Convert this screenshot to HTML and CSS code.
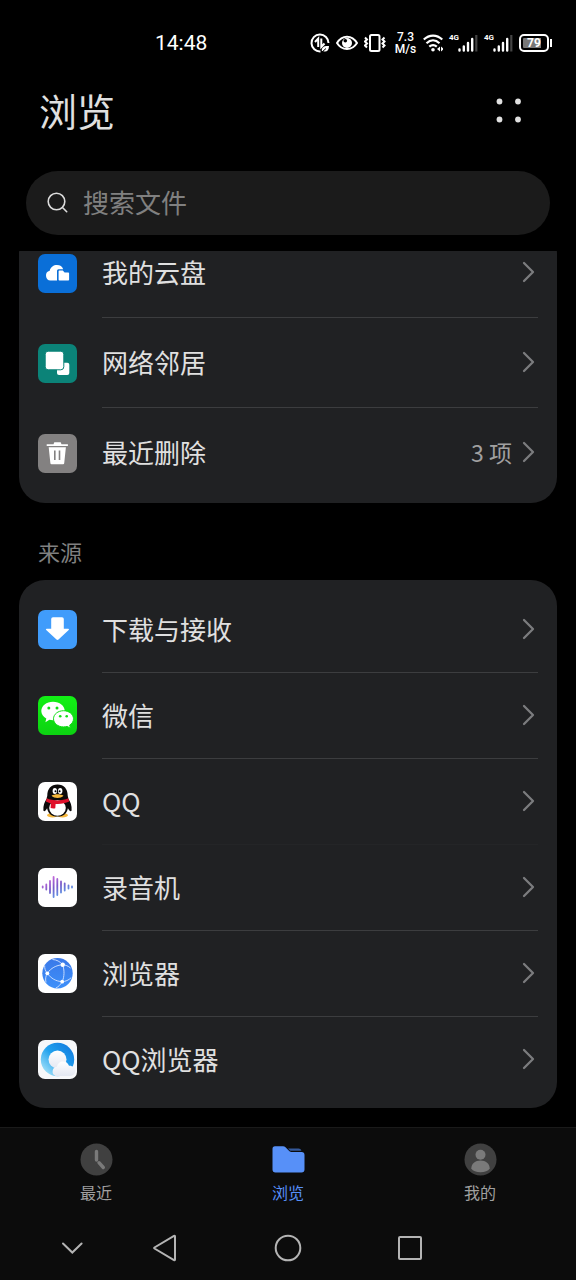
FILE: index.html
```html
<!DOCTYPE html>
<html lang="zh-CN">
<head>
  <meta charset="UTF-8">
  <meta name="viewport" content="width=device-width, initial-scale=1.0">
  <title>浏览</title>
  <link rel="stylesheet" href="styles.css">
</head>
<body>
  <svg class="defs" aria-hidden="true">
    <symbol id="chevron" viewBox="0 0 14 22">
      <path d="M2 2l9 9-9 9" fill="none" stroke="currentColor" stroke-width="2.300" stroke-linecap="round" stroke-linejoin="round"/>
    </symbol>
    <symbol id="bars" viewBox="0 0 20 18">
      <path d="M1.500 15.500v1M5.800 12.500v4M10 9v7.500M14.200 5v11.500" stroke="#fff" stroke-width="2.400" stroke-linecap="round"/>
      <path d="M18.300 1v16.500" stroke="#444" stroke-width="2.200"/>
    </symbol>
  </svg>

  <div class="status-bar">
    <span class="time">14:48</span>
    <div class="status-icons">
      <svg width="20" height="20" viewBox="0 0 20 20" fill="none" stroke="#fff" stroke-width="2">
        <path d="M10.500 18.500A8.500 8.500 0 1 1 18.500 10"/>
        <path d="M8.200 14V5.500L5 9M11.300 5.500V14l3.200-3.500"/>
        <path d="M12 18.500c-1-4 2-6 7-5.500 0 5-3 6.500-6 5z" fill="#fff" stroke="none"/>
        <path d="M12 19l4-3.500" stroke="#000" stroke-width="1"/>
      </svg>
      <svg width="22" height="20" viewBox="0 0 22 20">
        <path d="M1 10C6 1.500 16 1.500 21 10 16 18 6 18 1 10z" fill="none" stroke="#fff" stroke-width="2"/>
        <circle cx="11" cy="10" r="5" fill="#fff"/>
        <circle cx="9.300" cy="7.800" r="1.800" fill="#000"/>
      </svg>
      <svg width="24" height="20" viewBox="0 0 24 20" fill="none" stroke="#fff">
        <rect x="6" y="2" width="9.500" height="16" rx="1.500" stroke-width="2"/>
        <path d="M1 4.500l2 2-2 2 2 2-2 2 2 2M20.500 4.500l-2 2 2 2-2 2 2 2-2 2" stroke-width="2"/>
      </svg>
      <span class="speed"><span>7.3</span><span>M/s</span></span>
      <svg width="20" height="20" viewBox="0 0 20 20" fill="none" stroke="#fff" stroke-width="2.200">
        <path d="M0.800 6.500c5.500-5.300 13-5.300 18.500 0M3.500 10.200c4-3.700 9-3.700 13 0M6.300 13.700c2.300-2 5.200-2 7.500 0"/>
        <circle cx="10" cy="16.700" r="1.800" fill="#fff" stroke="none"/>
        <path d="M17 13.500v5l-3-2.500zM18 13.500v5l3-2.500z" fill="#fff" stroke="none"/>
      </svg>
      <span class="signal"><b>4G</b><svg width="20" height="18"><use href="#bars"/></svg></span>
      <span class="signal"><b>4G</b><svg width="20" height="18"><use href="#bars"/></svg></span>
      <span class="battery"><span class="level">79</span></span>
    </div>
  </div>

  <header class="header">
    <h1>浏览</h1>
    <button class="menu-btn" aria-label="更多">
      <svg width="30" height="30" viewBox="0 0 30 30" fill="#e0e0e0">
        <circle cx="5.500" cy="5.500" r="2.900"/>
        <circle cx="24" cy="5.500" r="2.900"/>
        <circle cx="5.500" cy="23.500" r="2.900"/>
        <circle cx="24" cy="23.500" r="2.900"/>
      </svg>
    </button>
  </header>

  <label class="search">
    <svg width="22" height="22" viewBox="0 0 22 22" fill="none" stroke="#dcdcdc" stroke-width="1.600" stroke-linecap="round">
      <circle cx="9.500" cy="9.500" r="8.300"/>
      <path d="M16 16l3.700 3.700"/>
    </svg>
    <input type="text" placeholder="搜索文件" aria-label="搜索文件">
  </label>

  <main class="content">
    <ul class="card places">
      <li><a class="row" href="#">
        <svg class="icon" viewBox="0 0 39 39">
          <rect width="39" height="39" rx="7" fill="#0a6fd8"/>
          <path d="M19 26.500h-6.500a5 5 0 0 1-.800-9.800C12.800 12.800 15.500 11 19 11c3 0 5.500 1.600 6.200 4.200H20.500q-1.500 0-1.500 1.500z" fill="#fff"/>
          <path d="M20.600 17.300q0-.800.800-.800h3.400l1.800 1.900h3.700q.800 0 .800.800v6.500q0 .800-.800.800h-8.900q-.800 0-.800-.800z" fill="#fff"/>
        </svg>
        <span class="label">我的云盘<svg class="arrow"><use href="#chevron"/></svg></span>
      </a></li>
      <li><a class="row" href="#">
        <svg class="icon" viewBox="0 0 39 39">
          <rect width="39" height="39" rx="7" fill="#0b8378"/>
          <rect x="19" y="18.700" width="12.300" height="12.300" rx="2" fill="#fff"/>
          <rect x="7.200" y="7.200" width="18.600" height="18.600" rx="3" fill="#fff" stroke="#0b8378"/>
        </svg>
        <span class="label">网络邻居<svg class="arrow"><use href="#chevron"/></svg></span>
      </a></li>
      <li><a class="row" href="#">
        <svg class="icon" viewBox="0 0 39 39">
          <rect width="39" height="39" rx="7" fill="#838181"/>
          <path d="M8.700 10.300h6.800l.8-2h6.400l.8 2h6.400v1.800H8.700zM10.700 13.200h17.200l-1.700 16q-.100 1-1.100 1H13.500q-1 0-1.100-1z" fill="#fff"/>
          <path d="M16.800 16.500v9.500M21.500 16.500v9.500" stroke="#838181" stroke-width="1.600"/>
        </svg>
        <span class="label">最近删除<span class="count">3 项</span><svg class="arrow"><use href="#chevron"/></svg></span>
      </a></li>
    </ul>

    <h2>来源</h2>
    <ul class="card sources">
      <li><a class="row" href="#">
        <svg class="icon" viewBox="0 0 39 39">
          <rect width="39" height="39" rx="7" fill="#409cfb"/>
          <path d="M15 7.200h9q1.800 0 1.800 1.800v9.800h4.500q1.300.200.400 1.300L20.500 29.600q-1 .800-2 0L8.200 20.100q-.900-1.100.4-1.300h4.600V9q0-1.800 1.800-1.800z" fill="#fff"/>
        </svg>
        <span class="label">下载与接收<svg class="arrow"><use href="#chevron"/></svg></span>
      </a></li>
      <li><a class="row" href="#">
        <svg class="icon" viewBox="0 0 39 39">
          <linearGradient id="green" x2="0" y2="1"><stop stop-color="#12f015"/><stop offset="1" stop-color="#0cd211"/></linearGradient>
          <rect width="39" height="39" rx="7" fill="url(#green)"/>
          <path d="M15 5.700c6.600 0 11.800 4.200 11.800 9.300S21.600 24.300 15 24.300c-1.300 0-2.500-.200-3.600-.500l-4 2.400.9-3.800C5.200 20.700 3.300 18 3.300 15 3.300 9.900 8.400 5.700 15 5.700z" fill="#fff"/>
          <path d="M25.500 14.700c5.500 0 10 3.600 10 8.100 0 2.600-1.500 4.900-3.800 6.300l.7 3-3.300-1.700c-1.100.300-2.300.500-3.600.500-5.500 0-10-3.600-10-8.100s4.500-8.100 10-8.100z" fill="#fff" stroke="#10df14" stroke-width="1"/>
          <g fill="#10df14"><circle cx="10.800" cy="12" r="1.500"/><circle cx="19" cy="12" r="1.500"/><circle cx="22.200" cy="20.200" r="1.300"/><circle cx="28.700" cy="20.200" r="1.300"/></g>
        </svg>
        <span class="label">微信<svg class="arrow"><use href="#chevron"/></svg></span>
      </a></li>
      <li class="faint"><a class="row" href="#">
        <svg class="icon" viewBox="0 0 39 39">
          <rect width="39" height="39" rx="7" fill="#fff"/>
          <ellipse cx="14.500" cy="33.200" rx="5.500" ry="2.200" fill="#f6b73c"/>
          <ellipse cx="24.500" cy="33.200" rx="5.500" ry="2.200" fill="#f6b73c"/>
          <path d="M19.500 2.500c-6.500 0-10.200 4.500-10.200 11 0 1-.700 1.800-.600 3.300C6.500 20 5 23.500 5.400 28.500c.800 1.500 2.200.200 3.700-2.300C10 31 13 34.500 19.500 34.500S29 31 29.900 26.200c1.500 2.500 2.900 3.800 3.700 2.300.4-5-1.100-8.500-3.300-11.700.1-1.500-.6-2.300-.6-3.300 0-6.500-3.700-11-10.200-11z" fill="#0c0a0a"/>
          <ellipse cx="19.500" cy="26" rx="8.300" ry="7.700" fill="#fff"/>
          <path d="M8.800 16.300c6 2.800 15.500 2.800 21.500 0l.9 3.300c-4 2-8.500 2.700-13.600 2.400l-.3 4.300q-2.500.500-4.700-.300l.3-4.600c-1.800-.400-3.500-1-5-1.800z" fill="#e0102a"/>
          <ellipse cx="16.800" cy="9" rx="2.200" ry="2.900" fill="#fff"/><ellipse cx="22.200" cy="9" rx="2.200" ry="2.900" fill="#fff"/>
          <circle cx="17.500" cy="9.300" r="1"/><circle cx="21.600" cy="9.300" r="1"/>
          <path d="M13.500 13.700c3-2 9-2 12 0-3 2.900-9 2.900-12 0z" fill="#f6b73c"/>
        </svg>
        <span class="label">QQ<svg class="arrow"><use href="#chevron"/></svg></span>
      </a></li>
      <li><a class="row" href="#">
        <svg class="icon" viewBox="0 0 39 39">
          <linearGradient id="wave" gradientUnits="userSpaceOnUse" x1="10" y1="8" x2="22" y2="31"><stop stop-color="#d76be0"/><stop offset=".5" stop-color="#7a5bc8"/><stop offset="1" stop-color="#54a8ee"/></linearGradient>
          <rect width="39" height="39" rx="7" fill="#fff"/>
          <path d="M4.700 18.500v1M8.300 16.500v5M12 13v12M15.600 9v20M19.300 11v16M23 13.500v11M26.700 15.500v7M30.500 17.500v3M34 18.500v1" stroke="url(#wave)" stroke-width="1.800" stroke-linecap="round"/>
        </svg>
        <span class="label">录音机<svg class="arrow"><use href="#chevron"/></svg></span>
      </a></li>
      <li><a class="row" href="#">
        <svg class="icon" viewBox="0 0 39 39">
          <linearGradient id="globe" x2="0" y2="1"><stop stop-color="#3a78e8"/><stop offset="1" stop-color="#3d90fa"/></linearGradient>
          <rect width="39" height="39" rx="7" fill="#fff"/>
          <circle cx="19.500" cy="19.300" r="15.200" fill="url(#globe)"/>
          <path d="M9.300 19.300C13 14 18 11.300 24.700 10.700c1.800 5.500 1.800 12-.5 17C18 27.300 13 24.500 9.300 19.300zM9.300 19.300C7.200 16.500 6.500 14.500 6.700 11.500M9.300 19.300C7.500 22.500 7.300 25 8 28.500M24.700 10.700C22 7.500 18.500 5.700 14.500 5.500M24.700 10.700c3 .300 5.500 1.300 7.800 3.300M24.200 27.700c3.300-.2 6.300-1.500 9-4M24.200 27.700c-1.700 3-3.500 4.800-6.500 6.500" fill="none" stroke="#c7dcff" stroke-width="1"/>
          <g fill="#fff"><circle cx="9.300" cy="19.300" r="1.900"/><circle cx="24.700" cy="10.700" r="2.200"/><circle cx="24.200" cy="27.700" r="1.900"/></g>
        </svg>
        <span class="label">浏览器<svg class="arrow"><use href="#chevron"/></svg></span>
      </a></li>
      <li><a class="row" href="#">
        <svg class="icon" viewBox="0 0 39 39">
          <linearGradient id="ring" x1="1" y1="0" x2="0" y2="1"><stop stop-color="#0f74dc"/><stop offset=".5" stop-color="#22a2ee"/><stop offset="1" stop-color="#c4f1fb"/></linearGradient>
          <linearGradient id="cloud" x2="0" y2="1"><stop stop-color="#fff"/><stop offset="1" stop-color="#e4e8f2"/></linearGradient>
          <rect width="39" height="39" rx="7" fill="#f7f8fa"/>
          <circle cx="19.500" cy="19.500" r="16.700" fill="url(#ring)"/>
          <circle cx="19.500" cy="19.500" r="9" fill="url(#cloud)"/>
          <path d="M17.500 36a4.800 4.800 0 0 1 1.500-9.200c.500-3.300 3-5.300 6-5.300 2.800 0 5 1.500 6 4.200 3.500-.2 6.200 2 6.200 5.100 0 3-2.200 5.200-5.200 5.200z" fill="url(#cloud)"/>
        </svg>
        <span class="label">QQ浏览器<svg class="arrow"><use href="#chevron"/></svg></span>
      </a></li>
    </ul>
  </main>

  <footer class="bottom">
    <nav class="tabs">
      <a href="#">
        <svg width="33" height="33" viewBox="0 0 33 33">
          <circle cx="16.500" cy="16.500" r="16" fill="#404040"/>
          <path d="M16.500 8.500v8.500M19 19.700l4.300 4.800" stroke="#7a7a7a" stroke-width="3.400" stroke-linecap="round"/>
        </svg>
        最近
      </a>
      <a class="active" href="#">
        <svg width="33" height="33" viewBox="0 0 33 33" fill="#5790f8">
          <path d="M3 3.300h8q1.500 0 2.500 1l4 4q.800.800 2 .800h10q3 0 3 3v14.500q0 3-3 3H3.500q-3 0-3-3V5.800q0-2.500 2.500-2.500z"/>
          <path d="M16 5.500h10.500q2.200 0 3 2.300H18.300z" fill="#35599a"/>
        </svg>
        浏览
      </a>
      <a href="#">
        <svg width="33" height="33" viewBox="0 0 33 33">
          <circle cx="16.500" cy="16.500" r="16" fill="#404040"/>
          <circle cx="16.500" cy="11.700" r="5" fill="#7a7a7a"/>
          <path d="M7.300 25.500c0-5 4-8 9.200-8s9.200 3 9.200 8c-1.500 2.500-5 3.700-9.200 3.700s-7.700-1.200-9.200-3.700z" fill="#7a7a7a"/>
        </svg>
        我的
      </a>
    </nav>
    <div class="system-nav">
      <button aria-label="收起"><svg width="30" height="30" viewBox="0 0 30 30"><path d="M4 10.500l9.300 9 9.300-9"/></svg></button>
      <button aria-label="返回"><svg width="30" height="30" viewBox="0 0 30 30"><path d="M25 3.500v23q0 1-1 .500L4.500 15.500q-.700-.500 0-1L24 3q1-.500 1 .500z"/></svg></button>
      <button aria-label="主页"><svg width="30" height="30" viewBox="0 0 30 30"><circle cx="15" cy="15" r="12.300"/></svg></button>
      <button aria-label="任务"><svg width="30" height="30" viewBox="0 0 30 30"><rect x="4" y="4" width="22" height="22" rx="1"/></svg></button>
    </div>
  </footer>
</body>
</html>
```
FILE: styles.css
```css
* {
  box-sizing: border-box;
}
body {
  margin: 0;
  height: 100vh;
  display: flex;
  flex-direction: column;
  background: #000;
  color: #e0e0e0;
  font-family: "Noto Sans CJK SC", sans-serif;
}
a {
  color: inherit;
  text-decoration: none;
}
button {
  padding: 0;
  border: none;
  background: none;
  cursor: pointer;
}
svg {
  display: block;
  flex-shrink: 0;
}
.defs {
  position: absolute;
  width: 0;
  height: 0;
}

/* status bar */
.status-bar {
  display: flex;
  align-items: center;
  justify-content: space-between;
  height: 86px;
  flex-shrink: 0;
  padding: 0 23px 0 155px;
  color: #fff;
  font-family: Roboto, sans-serif;
}
.time {
  font-size: 21px;
}
.status-icons {
  display: flex;
  align-items: center;
  gap: 6px;
}
.speed {
  display: flex;
  flex-direction: column;
  align-items: center;
  width: 23px;
  font-size: 12px;
  font-weight: 500;
  line-height: 12px;
}
.signal {
  display: flex;
  align-items: flex-start;
  width: 29px;
}
.signal b {
  width: 9px;
  font-size: 8px;
  line-height: 8px;
}
.battery {
  position: relative;
  width: 30px;
  height: 18px;
  margin-right: 4px;
  padding: 2px;
  border: 2px solid #fff;
  border-radius: 5px;
}
.battery::after {
  content: "";
  position: absolute;
  right: -5px;
  top: 3px;
  width: 2px;
  height: 8px;
  background: #fff;
}
.level {
  display: block;
  height: 10px;
  border-radius: 1px;
  background: linear-gradient(90deg, #777 80%, transparent 80%);
  font-size: 12px;
  font-weight: 700;
  line-height: 10px;
  text-align: center;
}

/* title and search */
.header {
  display: flex;
  align-items: center;
  justify-content: space-between;
  height: 50px;
  flex-shrink: 0;
  padding: 0 52px 0 39px;
}
h1 {
  margin: 0;
  padding-bottom: 2px;
  font-size: 38px;
  font-weight: 400;
  line-height: 48px;
}
.search {
  display: flex;
  align-items: center;
  gap: 14px;
  height: 64px;
  flex-shrink: 0;
  margin: 35px 26px 16px;
  padding: 0 21px;
  border-radius: 32px;
  background: #1b1b1b;
}
.search input {
  flex: 1;
  min-width: 0;
  padding: 0 0 3px;
  border: none;
  outline: none;
  background: none;
  color: #e0e0e0;
  font: inherit;
  font-size: 26px;
}
.search input::placeholder {
  color: #808080;
}

/* lists */
.content {
  flex: 1;
  min-height: 0;
  padding: 0 19px;
  overflow-y: auto;
  scrollbar-width: none;
}
.card {
  margin: 0;
  padding: 0 19px 5px;
  border-radius: 26px;
  background: #202123;
  list-style: none;
}
.row {
  display: flex;
  align-items: center;
  gap: 25px;
}
.icon {
  width: 39px;
  height: 39px;
}
.label {
  display: flex;
  flex: 1;
  align-items: center;
  height: 86px;
  padding-bottom: 2px;
  border-bottom: 1px solid #3c3d3f;
  font-size: 26px;
}
/* first list is scrolled up under the search box */
.places {
  margin-top: -23px;
}
.places .label {
  height: 90px;
}
.sources {
  padding-top: 7px;
}
.sources .icon {
  margin-bottom: 2px;
}
.card .faint .label {
  border-color: #242527;
}
.card li:last-child .label {
  border-color: transparent;
}
.arrow {
  width: 14px;
  height: 22px;
  margin-left: auto;
  margin-right: 2px;
  color: #7b7c7e;
}
.count {
  margin-left: auto;
  margin-right: 10px;
  color: #a0a0a0;
  font-size: 23px;
}
.count + .arrow {
  margin-left: 0;
}
h2 {
  margin: 31px 19px 12px;
  color: #808080;
  font-size: 22px;
  font-weight: 400;
  line-height: 34px;
}

/* bottom bars */
.bottom {
  flex-shrink: 0;
  border-top: 1px solid #1a1a1a;
  background: #0c0c0c;
}
.tabs {
  display: grid;
  grid-template-columns: repeat(3, 1fr);
  padding: 15px 0 12px;
  color: #a0a0a0;
  font-size: 16px;
  line-height: 24px;
}
.tabs a {
  display: flex;
  flex-direction: column;
  align-items: center;
  gap: 4px;
}
.tabs .active {
  color: #5790f8;
}
.system-nav {
  display: grid;
  grid-template-columns: 1fr 2fr 2fr 2fr;
  height: 64px;
  padding: 0 105px 0 43px;
}
.system-nav button {
  display: flex;
  align-items: center;
  justify-content: center;
}
.system-nav svg {
  fill: none;
  stroke: #b4b4b4;
  stroke-width: 2;
  stroke-linecap: round;
}
```
